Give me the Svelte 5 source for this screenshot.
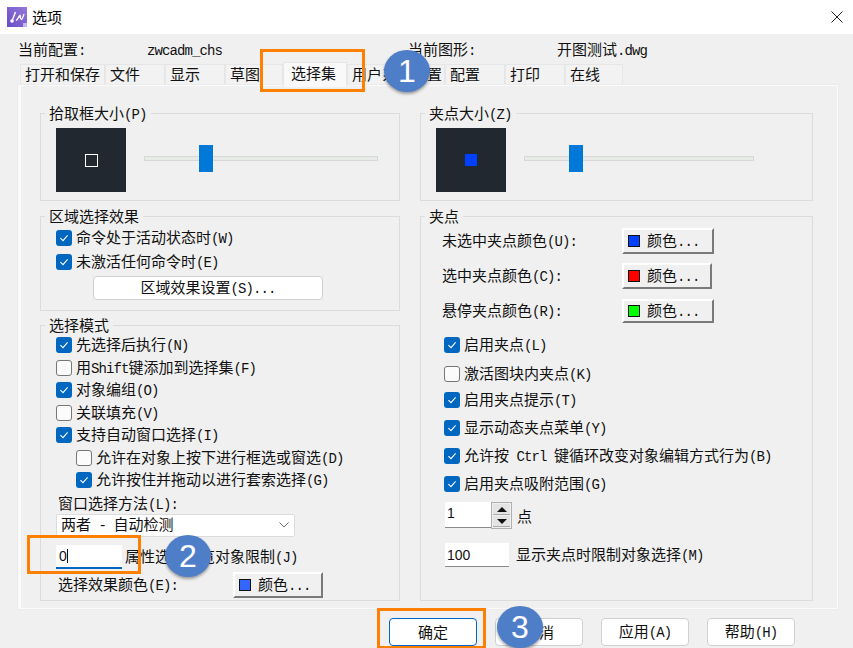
<script>
  // tab strip, widths read off the dialog
  const tabs = [
    { name: '打开和保存', w: 85 },
    { name: '文件', w: 60 },
    { name: '显示', w: 60 },
    { name: '草图', w: 58 },
    { name: '选择集', w: 64, active: true },
    { name: '用户系统配置', w: 98 },
    { name: '配置', w: 60 },
    { name: '打印', w: 60 },
    { name: '在线', w: 58 }
  ];

  const modeRows = [
    { label: '先选择后执行(N)', on: true },
    { label: '用Shift键添加到选择集(F)', on: false },
    { label: '对象编组(O)', on: true },
    { label: '关联填充(V)', on: false },
    { label: '支持自动窗口选择(I)', on: true },
    { label: '允许在对象上按下进行框选或窗选(D)', on: false, sub: true },
    { label: '允许按住并拖动以进行套索选择(G)', on: true, sub: true }
  ];

  const gripRows = [
    { label: '启用夹点(L)', on: true, gap: 'g13' },
    { label: '激活图块内夹点(K)', on: false, gap: 'g10' },
    { label: '启用夹点提示(T)', on: true, gap: 'g12' },
    { label: '显示动态夹点菜单(Y)', on: true, gap: 'g12' },
    { label: '允许按 Ctrl 键循环改变对象编辑方式行为(B)', on: true, gap: 'g12' },
    { label: '启用夹点吸附范围(G)', on: true, gap: 'g10' }
  ];

  // SimSun style text: latin is half the width of a CJK char
  function runs(s) {
    return s.split(/([\x20-\x7e]+)/).filter(Boolean).map((t) => ({
      t,
      latin: /^[\x20-\x7e]/.test(t)
    }));
  }
</script>

{#snippet txt(s)}{#each runs(s) as r}{#if r.latin}<span class="mono">{r.t}</span>{:else}{r.t}{/if}{/each}{/snippet}

{#snippet check(on, label)}
  <span class="box" class:on>
    {#if on}
      <svg width="16" height="16" viewBox="0 0 16 16"><path d="M4.4 8.2 7 10.6 11.6 5.4" fill="none" stroke="#fff" stroke-width="1.1" /></svg>
    {/if}
  </span>
  <span class="label">{@render txt(label)}</span>
{/snippet}

{#snippet colorBtn(color, extra)}
  <button class="color-btn {extra}">
    <span class="swatch" style="background:{color}"></span>
    <span>{@render txt('颜色...')}</span>
  </button>
{/snippet}

<div class="dialog">
  <header class="titlebar">
    <svg class="app-icon" width="20" height="20" viewBox="0 0 20 20">
      <defs>
        <linearGradient id="ic" x1="0" y1="1" x2="1" y2="0">
          <stop offset="0" stop-color="#6a4cc4" />
          <stop offset="1" stop-color="#9479dc" />
        </linearGradient>
      </defs>
      <rect width="20" height="20" fill="url(#ic)" />
      <circle cx="5" cy="14" r="1.8" fill="#fff" />
      <path d="M5 14 8.5 5M9 13.5C11 12 12 9 13 8.5 13.5 11 13.5 12.5 14.5 12.5 15.5 12.5 16 9.5 17 7" fill="none" stroke="#fff" stroke-width="1.4" />
      <rect x="16" y="16" width="4" height="4" fill="#c4b6ee" />
    </svg>
    <span class="title">选项</span>
    <svg class="close" width="12" height="12" viewBox="0 0 12 12"><path d="M0.5 0.5 11.5 11.5M11.5 0.5 0.5 11.5" stroke="#222" stroke-width="1" /></svg>
  </header>

  <div class="info">
    <span class="i1">{@render txt('当前配置:')}</span>
    <span class="i2">{@render txt('zwcadm_chs')}</span>
    <span class="i3">{@render txt('当前图形:')}</span>
    <span>{@render txt('开图测试.dwg')}</span>
  </div>

  <div class="tabs">
    {#each tabs as tab}
      <div class="tab" class:active={tab.active} style="width:{tab.w}px">{tab.name}</div>
    {/each}
  </div>

  <section class="panel">
    <div class="col">
      <fieldset class="g-size">
        <legend>{@render txt('拾取框大小(P)')}</legend>
        <div class="size-row">
          <div class="preview"><span class="pick"></span></div>
          <div class="track left"><span class="thumb" style="left:54px"></span></div>
        </div>
      </fieldset>

      <fieldset class="g-region">
        <legend>区域选择效果</legend>
        <div class="row r24">{@render check(true, '命令处于活动状态时(W)')}</div>
        <div class="row r24">{@render check(true, '未激活任何命令时(E)')}</div>
        <button class="plain region-btn">{@render txt('区域效果设置(S)...')}</button>
      </fieldset>

      <fieldset class="g-mode">
        <legend>选择模式</legend>
        <div class="rows">
          {#each modeRows as r}
            <div class="row r22" class:sub={r.sub}>{@render check(r.on, r.label)}</div>
          {/each}
        </div>
        <div class="line method">{@render txt('窗口选择方法(L):')}</div>
        <div class="combo">
          <span>{@render txt('两者 - 自动检测')}</span>
          <svg width="10" height="6" viewBox="0 0 10 6"><path d="M0.5 0.5 5 5 9.5 0.5" fill="none" stroke="#666" /></svg>
        </div>
        <div class="limit">
          <div class="edit focus">
            <span class="digit">0</span><span class="caret"></span>
          </div>
          <span class="label">{@render txt('属性选择预览对象限制(J)')}</span>
        </div>
        <div class="effect">
          <span>{@render txt('选择效果颜色(E):')}</span>
          {@render colorBtn('#3366ff', 'w90')}
        </div>
      </fieldset>
    </div>

    <div class="col">
      <fieldset class="g-size">
        <legend>{@render txt('夹点大小(Z)')}</legend>
        <div class="size-row">
          <div class="preview"><span class="grip"></span></div>
          <div class="track right"><span class="thumb" style="left:44px"></span></div>
        </div>
      </fieldset>

      <fieldset class="g-grips">
        <legend>夹点</legend>
        <div class="color-row r1">
          <span>{@render txt('未选中夹点颜色(U):')}</span>
          {@render colorBtn('#0040ff', 'w92')}
        </div>
        <div class="color-row r2">
          <span>{@render txt('选中夹点颜色(C):')}</span>
          {@render colorBtn('#ff0000', 'w90')}
        </div>
        <div class="color-row r3">
          <span>{@render txt('悬停夹点颜色(R):')}</span>
          {@render colorBtn('#00ff00', 'w92 h24')}
        </div>
        <div class="grip-checks">
          {#each gripRows as r}
            <div class="row r16 {r.gap}">{@render check(r.on, r.label)}</div>
          {/each}
        </div>
        <div class="spin-row">
          <div class="spin">
            <div class="edit small"><span class="digit">1</span></div>
            <div class="arrows">
              <span class="arrow"><svg width="10" height="5" viewBox="0 0 10 5"><path d="M5 0 10 5H0Z" fill="#111" /></svg></span>
              <span class="arrow"><svg width="10" height="5" viewBox="0 0 10 5"><path d="M5 5 10 0H0Z" fill="#111" /></svg></span>
            </div>
          </div>
          <span>点</span>
        </div>
        <div class="max-row">
          <div class="edit hundred"><span class="digit">100</span></div>
          <span>{@render txt('显示夹点时限制对象选择(M)')}</span>
        </div>
      </fieldset>
    </div>
  </section>

  <footer class="actions">
    <button class="plain act default">确定</button>
    <button class="plain act">取消</button>
    <button class="plain act">{@render txt('应用(A)')}</button>
    <button class="plain act">{@render txt('帮助(H)')}</button>
  </footer>

  <!-- tutorial callouts drawn on top of the screenshot -->
  <div class="mark m1"></div>
  <div class="mark m2"></div>
  <div class="mark m3"></div>
  <div class="badge b1">1</div>
  <div class="badge b2">2</div>
  <div class="badge b3">3</div>
</div>

<style>
  :global(body) {
    margin: 0;
    overflow: hidden;
  }

  .dialog {
    position: relative;
    width: 853px;
    height: 648px;
    overflow: hidden;
    background: #f0f0f0;
    color: #111;
    font-family: "Noto Sans CJK SC", "Noto Sans", sans-serif;
    font-size: 15px;
    line-height: 20px;
  }

  /* taller than a plain 12.5px mono, squeezed back to half a CJK cell */
  .mono {
    font-family: "Liberation Mono", monospace;
    font-size: 14px;
    letter-spacing: -0.9px;
    white-space: pre;
  }

  .digit {
    font-family: "Liberation Sans", sans-serif;
    font-size: 14px;
  }

  .titlebar {
    display: flex;
    align-items: center;
    height: 34px;
    padding: 0 10px 0 7px;
    box-sizing: border-box;
    background: #fff;
  }

  .title {
    margin-left: 5px;
    color: #000;
  }

  .close {
    margin-left: auto;
  }

  .info {
    display: flex;
    align-items: center;
    height: 30px;
    padding: 2px 0 0 18px;
    box-sizing: border-box;
  }

  .i1 { width: 129px; }
  .i2 { width: 261px; }
  .i3 { width: 149px; }

  .tabs {
    display: flex;
    height: 21px;
    margin-left: 20px;
  }

  .tab {
    box-sizing: border-box;
    height: 21px;
    padding-left: 4px;
    background: #f2f2f2;
    border: 1px solid #e6e6e6;
    border-bottom: 0;
    white-space: nowrap;
    line-height: 18px;
  }

  .tab.active {
    height: 25px;
    margin-top: -2px;
    padding-left: 7px;
    padding-top: 1px;
    background: #f9f9f9;
    position: relative;
    z-index: 1;
  }

  .panel {
    display: grid;
    grid-template-columns: 360px 393px;
    gap: 20px;
    box-sizing: border-box;
    width: 820px;
    height: 524px;
    margin-left: 18px;
    padding: 17px 0 0 19px;
    background: #f0f0f0;
    border: 1px solid #fafafa;
    border-left-width: 3px;
    outline: 1px solid #ebebeb;
    outline-offset: 0;
  }

  .col {
    display: flex;
    flex-direction: column;
  }

  fieldset {
    box-sizing: border-box;
    margin: 0;
    padding: 0 0 0 15px;
    min-width: 0;
    border: 1px solid #dcdcdc;
  }

  legend {
    margin-left: -11px;
    padding: 0 4px;
    height: 20px;
  }

  .g-size { height: 98px; }
  .g-region { height: 105px; margin-top: 5px; }
  .g-mode { height: 286px; margin-top: 4px; }
  .g-grips { height: 395px; margin-top: 5px; padding-left: 0; }
  .g-grips legend { margin-left: 4px; }

  .size-row {
    display: flex;
    align-items: flex-start;
    margin-top: 5px;
  }

  .preview {
    display: flex;
    align-items: center;
    justify-content: center;
    flex: none;
    width: 70px;
    height: 64px;
    background: #212830;
  }

  .pick {
    box-sizing: border-box;
    width: 13px;
    height: 13px;
    border: 1px solid #fff;
  }

  .grip {
    width: 12px;
    height: 12px;
    background: #0040ff;
  }

  .track {
    position: relative;
    box-sizing: border-box;
    height: 5px;
    margin: 28px 0 0 18px;
    background: #e7eae7;
    border: 1px solid #d6dad6;
  }

  .track.left { width: 234px; }
  .track.right { width: 230px; }

  .thumb {
    position: absolute;
    top: -12px;
    width: 14px;
    height: 27px;
    background: #0078d7;
  }

  .row {
    display: flex;
    align-items: center;
    white-space: nowrap;
  }

  .r24 { height: 24px; }
  .r22 { height: 22.5px; }
  .r16 { height: 16px; }
  .g13 { margin-bottom: 13px; }
  .g12 { margin-bottom: 12px; }
  .g10 { margin-bottom: 10px; }

  .sub { padding-left: 20px; }

  .box {
    flex: none;
    box-sizing: border-box;
    width: 16px;
    height: 16px;
    background: #fbfbfb;
    border: 1px solid #777;
    border-radius: 3px;
  }

  .box.on {
    background: #0067c0;
    border: 0;
  }

  .box svg {
    display: block;
  }

  .label {
    margin-left: 4px;
  }

  .plain {
    box-sizing: border-box;
    padding: 0;
    color: #111;
    background: #fff;
    border: 1px solid #d0d0d0;
    border-radius: 4px;
    font: inherit;
    line-height: 20px;
  }

  .region-btn {
    display: block;
    width: 230px;
    height: 24px;
    margin: 2px 0 0 37px;
  }

  .rows {
    margin-top: -1px;
  }

  .line,
  .effect {
    padding-left: 2px;
  }

  .method {
    height: 22px;
    line-height: 22px;
  }

  .combo {
    display: flex;
    align-items: center;
    justify-content: space-between;
    box-sizing: border-box;
    width: 239px;
    height: 23px;
    padding: 0 5px 0 4px;
    background: #fff;
    border: 1px solid #dcdcdc;
    border-radius: 2px;
  }

  .limit {
    display: flex;
    align-items: center;
    margin-top: 8px;
    height: 24px;
  }

  .limit .label {
    margin-left: 3px;
  }

  .edit {
    display: flex;
    align-items: center;
    box-sizing: border-box;
    flex: none;
    background: #fff;
    border-bottom: 1px solid #8a8a8a;
    padding-left: 2px;
  }

  .edit.focus {
    width: 66px;
    height: 24px;
    padding-left: 3px;
    border-bottom: 2px solid #0067c0;
  }

  .caret {
    width: 1px;
    height: 14px;
    background: #111;
  }

  .edit.small {
    width: 46px;
    height: 26px;
    align-items: flex-start;
    padding-top: 1px;
  }

  .edit.hundred {
    width: 64px;
    height: 24px;
  }

  .effect {
    display: flex;
    align-items: center;
    justify-content: space-between;
    width: 265px;
    margin-top: 3px;
  }

  .color-btn {
    display: flex;
    align-items: center;
    box-sizing: border-box;
    height: 26px;
    padding: 0 0 0 4px;
    color: #111;
    background: #f0f0f0;
    border: 2px solid;
    border-color: #fff #7a7a7a #7a7a7a #fff;
    font: inherit;
    line-height: 20px;
  }

  .w90 { width: 90px; }
  .w92 { width: 92px; }
  .h24 { height: 24px; }

  .swatch {
    box-sizing: border-box;
    flex: none;
    width: 12px;
    height: 12px;
    margin-right: 7px;
    border: 1px solid #111;
  }

  .color-row {
    display: flex;
    align-items: center;
    justify-content: space-between;
    width: 272px;
    margin-left: 21px;
  }

  .r1 { margin-top: 2px; }
  .r2 { margin-top: 9px; width: 270px; }
  .r3 { margin-top: 10px; }

  .grip-checks {
    margin: 14px 0 0 23px;
  }

  .spin-row {
    display: flex;
    align-items: center;
    gap: 5px;
    margin: 0 0 0 24px;
  }

  .spin {
    display: flex;
    height: 27px;
  }

  .arrows {
    display: flex;
    flex-direction: column;
    box-sizing: border-box;
    width: 21px;
    height: 27px;
    padding: 1px;
    border: 1px solid #b0b0b0;
    gap: 1px;
  }

  .arrow {
    display: flex;
    align-items: center;
    justify-content: center;
    flex: 1;
    background: #e4e4e4;
    border-bottom: 1px solid #aaa;
  }

  .arrow svg {
    display: block;
  }

  .max-row {
    display: flex;
    align-items: center;
    gap: 7px;
    margin: 14px 0 0 24px;
  }

  .actions {
    display: flex;
    gap: 18px;
    margin: 9px 0 0 389px;
  }

  .act {
    width: 88px;
    height: 28px;
  }

  .act.default {
    border-color: #0067c0;
  }

  .mark {
    position: absolute;
    box-sizing: border-box;
    border: 3px solid #ff8000;
  }

  .m1 { left: 260px; top: 49px; width: 105px; height: 43px; }
  .m2 { left: 27px; top: 535px; width: 114px; height: 39px; }
  .m3 { left: 377px; top: 608px; width: 109px; height: 41px; }

  .badge {
    position: absolute;
    display: flex;
    align-items: center;
    justify-content: center;
    width: 46px;
    height: 42px;
    border-radius: 50%;
    color: #fff;
    background: #4f7ec9;
    box-shadow: 0 2px 3px rgba(0, 0, 0, 0.35);
    font-family: "Liberation Sans", sans-serif;
    font-size: 32px;
  }

  .b1 { left: 384px; top: 50px; }
  .b2 { left: 165px; top: 535px; }
  .b3 { left: 497px; top: 606px; }
</style>
